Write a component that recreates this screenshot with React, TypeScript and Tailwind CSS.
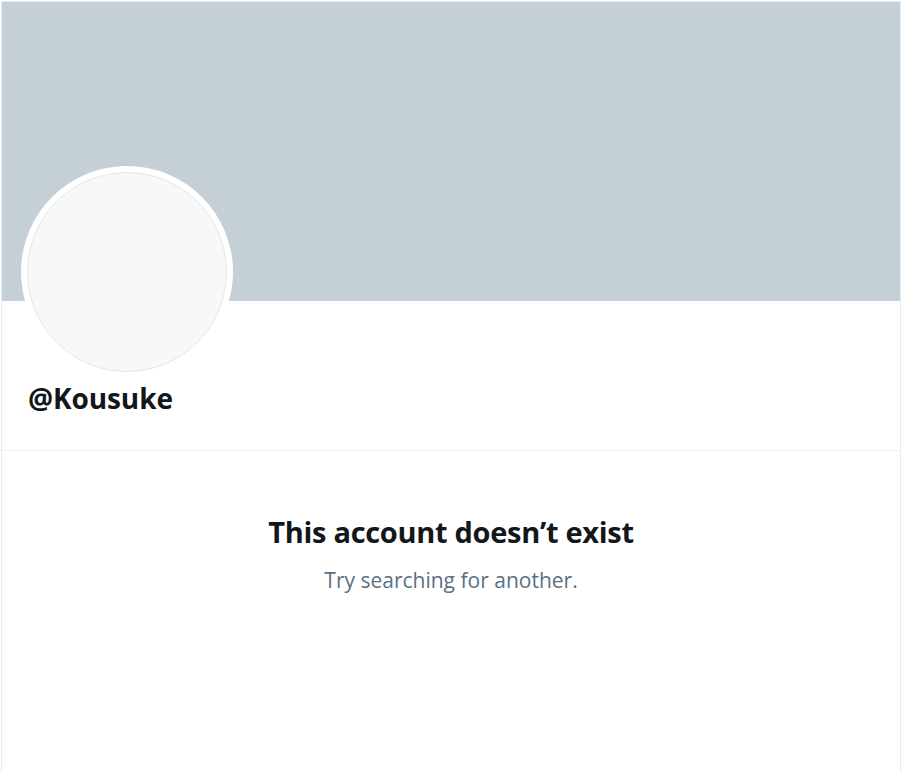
import React from 'react';

const font = { fontFamily: '"Open Sans", "Noto Sans", sans-serif' };

export default function App() {
  return (
    <div className="min-h-screen bg-white pl-px pt-px" style={font}>
      <div className="w-[900px] min-h-[772px] border-x border-t border-[#e6ecf0] flex flex-col">
        {/* banner */}
        <div className="h-[299px] w-full bg-[#c4cfd6]" />

        {/* avatar + name */}
        <div className="flex flex-col border-b border-[#eceff1] pb-[32px]">
          <div className="-mt-[135px] ml-[19px] w-[212px] h-[212px] rounded-full bg-white p-[6px]">
            <div className="w-full h-full rounded-full bg-[#f7f9f9] border border-[#e6e6e6]" />
          </div>
          <div className="ml-[26px] text-[28px] font-bold leading-[40px] text-[#14171a] tracking-[-0.1px]">
            @Kousuke
          </div>
        </div>

        {/* empty state */}
        <div className="flex flex-col items-center pt-[63px]">
          <h2 className="text-[29px] font-bold leading-[36px] text-[#14171a] tracking-[-0.3px]">
            This account doesn’t exist
          </h2>
          <p className="mt-[17px] text-[21px] leading-[26px] text-[#5b7083]">Try searching for another.</p>
        </div>
      </div>
    </div>
  );
}
